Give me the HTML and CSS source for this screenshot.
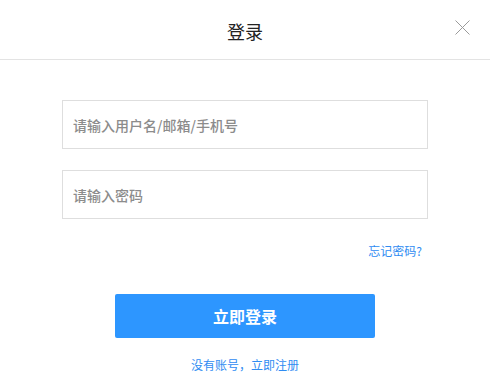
FILE: index.html
```html
<!DOCTYPE html>
<html lang="zh-CN">
<head>
<meta charset="utf-8">
<title>登录</title>
<link rel="stylesheet" href="styles.css">
</head>
<body>
<div class="dialog">
  <header class="header">
    <h1 class="title">登录</h1>
    <button class="close" aria-label="关闭">
      <svg width="15" height="15" viewBox="0 0 15 15"><path d="M0.5 0.5 L14.5 14.5 M14.5 0.5 L0.5 14.5" stroke="#9a9a9a" stroke-width="1" fill="none"/></svg>
    </button>
  </header>
  <form class="form">
    <input class="field" type="text" placeholder="请输入用户名/邮箱/手机号">
    <input class="field" type="password" placeholder="请输入密码">
    <div class="forgot-row"><a class="link" href="#">忘记密码?</a></div>
    <button class="submit" type="button">立即登录</button>
    <div class="register-row"><a class="link" href="#">没有账号，立即注册</a></div>
  </form>
</div>
</body>
</html>
```
FILE: styles.css
```css
html, body {
  margin: 0;
  padding: 0;
  background: #fff;
}
body {
  font-family: "Noto Sans CJK SC", "Noto Sans", sans-serif;
  color: #333;
}
.dialog {
  width: 490px;
  height: 390px;
  box-sizing: border-box;
}
.header {
  height: 59px;
  border-bottom: 1px solid #e3e3e3;
  display: flex;
  align-items: center;
  justify-content: center;
  position: relative;
}
.title {
  margin: 0;
  font-size: 18px;
  font-weight: 400;
  color: #222;
  line-height: 24px;
  padding-top: 2px;
}
.close {
  position: absolute;
  right: 20px;
  top: 20px;
  width: 15px;
  height: 15px;
  padding: 0;
  border: 0;
  background: none;
  display: block;
}
.close svg { display: block; }
.form {
  display: flex;
  flex-direction: column;
  align-items: center;
  padding-top: 40px;
}
.field {
  width: 366px;
  height: 49px;
  box-sizing: border-box;
  border: 1px solid #dedede;
  border-radius: 0;
  padding: 0 10px;
  font-family: inherit;
  font-size: 14px;
  font-weight: 500;
  color: #333;
  outline: none;
  margin: 0 0 21px;
}
.field::placeholder {
  color: #8c8c8c;
}
.forgot-row {
  width: 366px;
  display: flex;
  justify-content: flex-end;
  padding-right: 6px;
  box-sizing: border-box;
  margin-top: 2px;
  line-height: 18px;
}
.link {
  color: #2f8cf2;
  font-size: 12px;
  text-decoration: none;
}
.submit {
  margin-top: 34px;
  width: 260px;
  height: 44px;
  border: 0;
  border-radius: 2px;
  background: #2d96ff;
  color: #fff;
  font-family: inherit;
  font-size: 16px;
  font-weight: 700;
}
.register-row {
  margin-top: 16px;
  line-height: 18px;
}
```
